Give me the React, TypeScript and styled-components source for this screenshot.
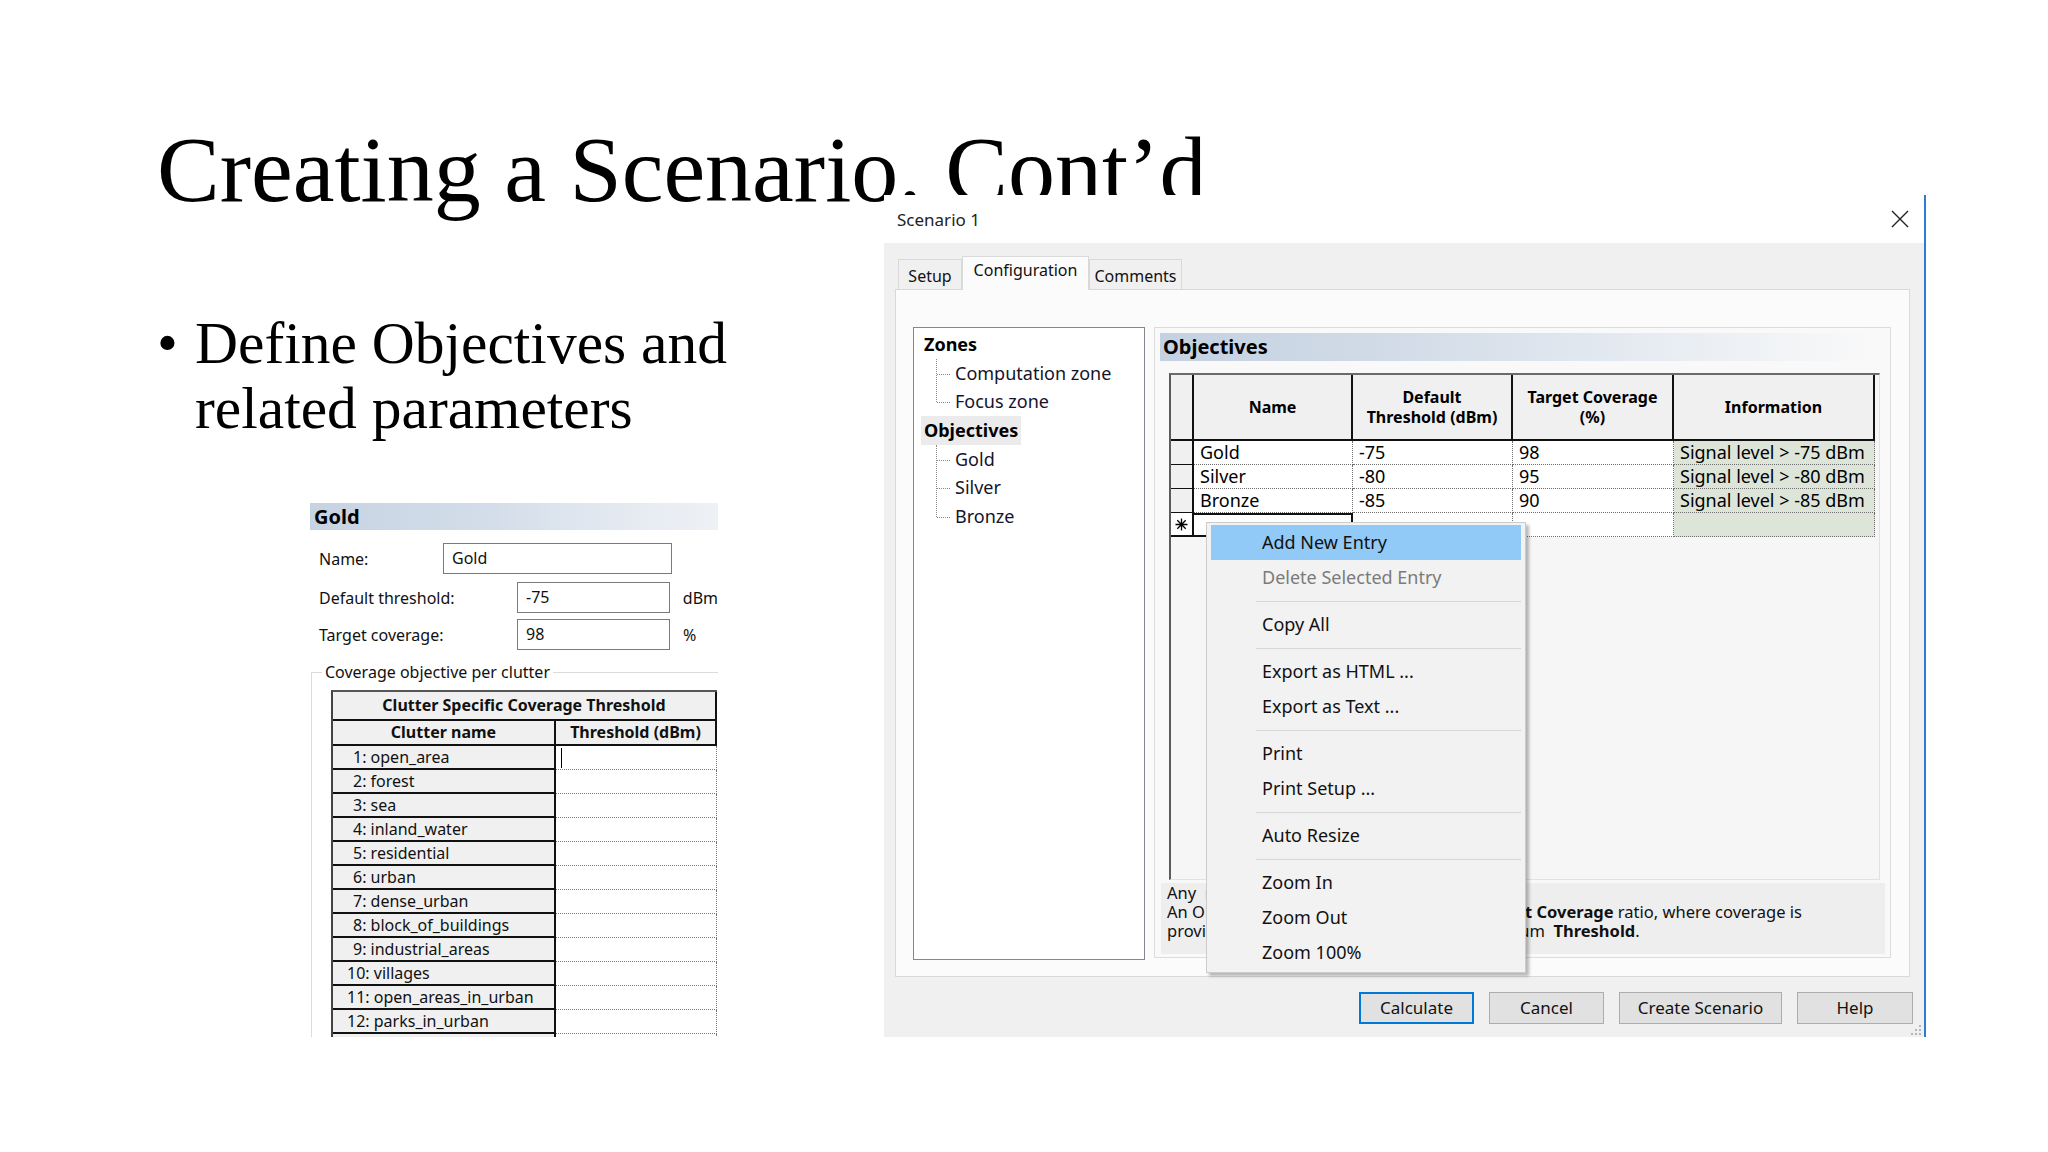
import React from 'react';
import styled, { createGlobalStyle } from 'styled-components';

const GlobalStyle = createGlobalStyle`
  html, body {
    margin: 0;
    padding: 0;
    background: #fff;
  }
  body {
    width: 2048px;
    height: 1152px;
    overflow: hidden;
  }
  * {
    box-sizing: border-box;
  }
`;

const UI_FONT = `'Noto Sans', 'Open Sans', 'DejaVu Sans', sans-serif`;

const Slide = styled.div`
  width: 2048px;
  height: 1152px;
  display: grid;
  grid-template-columns: 157px 727px 1042px 1fr;
  grid-template-rows: 195px 842px 1fr;
  background: #fff;
  font-family: 'Liberation Serif', 'Times New Roman', serif;
  color: #000;
`;

const Title = styled.h1`
  grid-column: 2 / 4;
  grid-row: 1;
  align-self: start;
  margin: 122px 0 0;
  font-size: 94px;
  line-height: 94px;
  font-weight: 400;
  white-space: nowrap;
`;

const LeftColumn = styled.div`
  grid-column: 2;
  grid-row: 2;
  display: flex;
  flex-direction: column;
  min-height: 0;
  overflow: hidden;
`;

const Bullet = styled.div`
  display: flex;
  margin-top: 116px;
  font-size: 59.5px;
  line-height: 65px;
`;

const BulletDot = styled.span`
  flex: none;
  width: 38px;
`;

/* ---------- left "Gold" panel ---------- */

const GoldPanel = styled.div`
  flex: 1;
  min-height: 0;
  width: 408px;
  margin: 62px 0 0 153px;
  overflow: hidden;
  font-family: ${UI_FONT};
  font-size: 16px;
  color: #111;
`;

const SectionBar = styled.div`
  height: 27px;
  padding-left: 4px;
  line-height: 27px;
  font-size: 20px;
  font-weight: 700;
  color: #000;
  background: linear-gradient(90deg, #c6d3e2 0%, #d4deea 45%, #e6ebf2 80%, #eef1f5 100%);
`;

const Form = styled.div`
  display: flex;
  flex-direction: column;
  padding: 13px 0 0 9px;
`;

const FormRow = styled.div<{ $gap: number }>`
  display: flex;
  align-items: center;
  height: 31px;
  margin-top: ${(p) => p.$gap}px;
`;

const FieldLabel = styled.span<{ $w: number }>`
  flex: none;
  width: ${(p) => p.$w}px;
`;

const Field = styled.div<{ $w: number }>`
  width: ${(p) => p.$w}px;
  height: 31px;
  padding-left: 8px;
  border: 1px solid #7a7a7a;
  background: #fff;
  line-height: 29px;
`;

const Unit = styled.span`
  margin-left: 13px;
`;

const GroupBox = styled.fieldset`
  margin: 11px 0 0 1px;
  padding: 0 0 0 19px;
  min-width: 0;
  border: 1px solid #dcdcdc;
  border-right: none;
  border-bottom: none;
`;

const GroupLegend = styled.legend`
  margin-left: -9px;
  padding: 0 3px;
  line-height: 22px;
`;

const ClutterTable = styled.div`
  width: 386px;
  margin-top: 7px;
  border-top: 2px solid #555;
  border-left: 2px solid #444;
`;

const ClutterTitle = styled.div`
  height: 29px;
  line-height: 27px;
  text-align: center;
  font-weight: 700;
  background: #f0f0f0;
  border-right: 2px solid #111;
  border-bottom: 2px solid #111;
`;

const ClutterRow = styled.div<{ $h: number }>`
  display: grid;
  grid-template-columns: 223px 161px;
  height: ${(p) => p.$h}px;
`;

const ClutterHead = styled.div`
  line-height: 23px;
  text-align: center;
  font-weight: 700;
  background: #f0f0f0;
  border-right: 2px solid #111;
  border-bottom: 2px solid #111;
`;

const ClutterName = styled.div<{ $pad: number }>`
  padding-left: ${(p) => p.$pad}px;
  line-height: 22px;
  background: #f0f0f0;
  border-right: 2px solid #111;
  border-bottom: 2px solid #111;
  white-space: nowrap;
  overflow: hidden;
`;

const ClutterValue = styled.div`
  display: flex;
  align-items: center;
  background: #fff;
  border-right: 1px dotted #777;
  border-bottom: 1px dotted #777;
`;

const Caret = styled.span`
  width: 1px;
  height: 20px;
  margin-left: 5px;
  background: #000;
`;

/* ---------- dialog ---------- */

const Dialog = styled.div`
  grid-column: 3;
  grid-row: 2;
  position: relative;
  z-index: 2;
  display: flex;
  flex-direction: column;
  border-right: 2px solid #2b7cd3;
  font-family: ${UI_FONT};
  color: #000;
  overflow: hidden;
`;

const TitleBar = styled.div`
  flex: none;
  display: flex;
  align-items: center;
  justify-content: space-between;
  height: 48px;
  padding: 0 15px 0 13px;
  background: #fff;
  font-size: 17px;
  color: #222;
`;

const Body = styled.div`
  flex: 1;
  display: flex;
  flex-direction: column;
  padding: 13px 14px 0 11px;
  background: #f0f0f0;
`;

const TabStrip = styled.div`
  position: relative;
  z-index: 1;
  display: flex;
  align-items: flex-end;
  height: 34px;
  margin-bottom: -1px;
  padding-left: 3px;
`;

const Tab = styled.div<{ $w: number; $active?: boolean }>`
  width: ${(p) => p.$w}px;
  height: ${(p) => (p.$active ? 34 : 31)}px;
  padding-top: ${(p) => (p.$active ? 0 : 3)}px;
  border: 1px solid #d9d9d9;
  border-bottom: ${(p) => (p.$active ? 'none' : '1px solid #d9d9d9')};
  background: ${(p) => (p.$active ? '#fbfbfb' : '#f0f0f0')};
  font-size: 16px;
  line-height: 27px;
  text-align: center;
  color: #111;
`;

const TabPanel = styled.div`
  flex: none;
  display: flex;
  align-items: flex-start;
  gap: 9px;
  height: 688px;
  padding: 37px 18px 16px 17px;
  border: 1px solid #d9d9d9;
  background: #fbfbfb;
`;

const TreeBox = styled.div`
  flex: none;
  width: 232px;
  height: 633px;
  padding: 2px 0 0 10px;
  border: 1px solid #828790;
  background: #fff;
  font-size: 18px;
`;

const TreeParent = styled.div<{ $hl?: boolean }>`
  height: 28.7px;
  line-height: 28.7px;
  font-weight: 700;

  span {
    display: inline-block;
    margin-left: -3px;
    padding: 0 3px;
    background: ${(p) => (p.$hl ? '#ebebeb' : 'transparent')};
  }
`;

const TreeChildren = styled.div`
  position: relative;

  &::before {
    content: '';
    position: absolute;
    left: 12px;
    top: 0;
    bottom: 14px;
    border-left: 1px dotted #8a8a8a;
  }
`;

const TreeChild = styled.div`
  position: relative;
  height: 28.7px;
  padding-left: 31px;
  line-height: 28.7px;
  color: #14142a;

  &::before {
    content: '';
    position: absolute;
    left: 13px;
    width: 13px;
    top: 15px;
    border-top: 1px dotted #8a8a8a;
  }
`;

const ObjPanel = styled.div`
  flex: 1;
  display: flex;
  flex-direction: column;
  height: 631px;
  padding: 5px;
  border: 1px solid #dcdcdc;
  background: #f9f9f9;
`;

const ObjHeader = styled(SectionBar)`
  height: 28px;
  margin-right: 13px;
  padding-left: 3px;
  line-height: 28px;
  background: linear-gradient(90deg, #c4d1e1 0%, #d3dce8 35%, #e7ecf2 70%, rgba(249, 249, 249, 0) 100%);
`;

const GridFrame = styled.div`
  flex: none;
  height: 507px;
  margin: 12px 5px 0 9px;
  border-top: 2px solid #6b6b6b;
  border-left: 2px solid #5b5b5b;
  border-right: 1px solid #e2e2e2;
  border-bottom: 1px solid #e2e2e2;
  background: #f6f6f6;
`;

const ObjGrid = styled.div`
  display: grid;
  grid-template-columns: 23px 159px 160px 161px 201px;
  grid-template-rows: 66px;
  grid-auto-rows: 24px;
  font-size: 18px;
`;

const HeadCell = styled.div`
  display: flex;
  align-items: center;
  justify-content: center;
  background: #f0f0f0;
  border-right: 2px solid #111;
  border-bottom: 2px solid #111;
  font-size: 16px;
  font-weight: 700;
  line-height: 20px;
  text-align: center;
`;

const SelCell = styled.div<{ $current?: boolean }>`
  display: flex;
  align-items: center;
  justify-content: center;
  background: ${(p) => (p.$current ? '#fff' : '#f0f0f0')};
  border-right: 2px solid #111;
  border-bottom: ${(p) => (p.$current ? 2 : 1)}px solid #111;
`;

const DataCell = styled.div<{ $info?: boolean; $focus?: boolean }>`
  padding-left: 6px;
  line-height: 23px;
  white-space: nowrap;
  overflow: hidden;
  background: ${(p) => (p.$info ? '#dde5d8' : '#fff')};
  border-right: 1px dotted #6f6f6f;
  border-bottom: 1px dotted #6f6f6f;
  ${(p) => (p.$focus ? 'border: 2px solid #111; border-left: none;' : '')}
`;

const Description = styled.div`
  flex: none;
  height: 71px;
  margin: 3px 0 0 1px;
  padding: 0 6px;
  background: #eeeeee;
  font-size: 16.5px;
  line-height: 19px;
  color: #111;
  white-space: pre;
  overflow: hidden;

  b {
    font-weight: 700;
  }
`;

const ButtonRow = styled.div`
  display: flex;
  justify-content: flex-end;
  gap: 15px;
  margin: 15px -3px 0 0;
`;

const Button = styled.div<{ $w: number; $default?: boolean }>`
  width: ${(p) => p.$w}px;
  height: 32px;
  border: ${(p) => (p.$default ? '2px solid #0078d7' : '1px solid #adadad')};
  background: #e1e1e1;
  font-size: 17px;
  line-height: ${(p) => (p.$default ? 28 : 30)}px;
  text-align: center;
  color: #111;
`;

const Grip = styled.svg`
  position: absolute;
  right: 3px;
  bottom: 2px;
`;

/* ---------- context menu ---------- */

const Menu = styled.div`
  position: absolute;
  left: 322px;
  top: 327px;
  width: 320px;
  padding: 2px 4px;
  border: 1px solid #cccccc;
  background: #f2f2f2;
  box-shadow: 3px 3px 3px rgba(0, 0, 0, 0.28);
  font-size: 18px;
`;

const MenuItem = styled.div<{ $active?: boolean; $disabled?: boolean }>`
  height: 35px;
  padding-left: 51px;
  line-height: 35px;
  color: ${(p) => (p.$disabled ? '#7b7b7b' : '#111')};
  background: ${(p) => (p.$active ? '#91c9f7' : 'transparent')};
`;

const MenuSep = styled.div`
  height: 12px;
  margin-left: 45px;
  display: flex;
  align-items: center;

  &::after {
    content: '';
    flex: 1;
    height: 1px;
    background: #d7d7d7;
  }
`;

const objectives = [
  { name: 'Gold', thr: '-75', cov: '98', info: 'Signal level > -75 dBm' },
  { name: 'Silver', thr: '-80', cov: '95', info: 'Signal level > -80 dBm' },
  { name: 'Bronze', thr: '-85', cov: '90', info: 'Signal level > -85 dBm' },
];

const clutters = [
  'open_area',
  'forest',
  'sea',
  'inland_water',
  'residential',
  'urban',
  'dense_urban',
  'block_of_buildings',
  'industrial_areas',
  'villages',
  'open_areas_in_urban',
  'parks_in_urban',
];

const menuGroups = [
  [{ label: 'Add New Entry', active: true }, { label: 'Delete Selected Entry', disabled: true }],
  [{ label: 'Copy All' }],
  [{ label: 'Export as HTML ...' }, { label: 'Export as Text ...' }],
  [{ label: 'Print' }, { label: 'Print Setup ...' }],
  [{ label: 'Auto Resize' }],
  [{ label: 'Zoom In' }, { label: 'Zoom Out' }, { label: 'Zoom 100%' }],
];

const CloseIcon = () => (
  <svg width="18" height="18" viewBox="0 0 18 18">
    <path d="M1 1 L17 17 M17 1 L1 17" stroke="#222" strokeWidth="1.4" fill="none" />
  </svg>
);

const NewRowStar = () => (
  <svg width="13" height="13" viewBox="0 0 13 13">
    <path
      d="M6.5 0.5 V12.5 M0.5 6.5 H12.5 M2.3 2.3 L10.7 10.7 M10.7 2.3 L2.3 10.7"
      stroke="#000"
      strokeWidth="1.3"
      fill="none"
    />
  </svg>
);

const App = () => {
  return (
    <>
      <GlobalStyle />
      <Slide>
        <Title>Creating a Scenario. Cont’d</Title>

        <LeftColumn>
          <Bullet>
            <BulletDot>•</BulletDot>
            <span>
              Define Objectives and
              <br />
              related parameters
            </span>
          </Bullet>

          <GoldPanel>
            <SectionBar>Gold</SectionBar>
            <Form>
              <FormRow $gap={0}>
                <FieldLabel $w={124}>Name:</FieldLabel>
                <Field $w={229}>Gold</Field>
              </FormRow>
              <FormRow $gap={8}>
                <FieldLabel $w={198}>Default threshold:</FieldLabel>
                <Field $w={153}>-75</Field>
                <Unit>dBm</Unit>
              </FormRow>
              <FormRow $gap={6}>
                <FieldLabel $w={198}>Target coverage:</FieldLabel>
                <Field $w={153}>98</Field>
                <Unit>%</Unit>
              </FormRow>
            </Form>
            <GroupBox>
              <GroupLegend>Coverage objective per clutter</GroupLegend>
              <ClutterTable>
                <ClutterTitle>Clutter Specific Coverage Threshold</ClutterTitle>
                <ClutterRow $h={25}>
                  <ClutterHead>Clutter name</ClutterHead>
                  <ClutterHead>Threshold (dBm)</ClutterHead>
                </ClutterRow>
                {clutters.map((c, i) => (
                  <ClutterRow $h={24} key={c}>
                    <ClutterName $pad={i < 9 ? 20 : 14}>{`${i + 1}: ${c}`}</ClutterName>
                    <ClutterValue>{i === 0 ? <Caret /> : null}</ClutterValue>
                  </ClutterRow>
                ))}
                <ClutterRow $h={24}>
                  <ClutterName $pad={14} />
                  <ClutterValue />
                </ClutterRow>
              </ClutterTable>
            </GroupBox>
          </GoldPanel>
        </LeftColumn>

        <Dialog>
          <TitleBar>
            <span>Scenario 1</span>
            <CloseIcon />
          </TitleBar>
          <Body>
            <TabStrip>
              <Tab $w={64}>Setup</Tab>
              <Tab $w={127} $active>
                Configuration
              </Tab>
              <Tab $w={93}>Comments</Tab>
            </TabStrip>
            <TabPanel>
              <TreeBox>
                <TreeParent>
                  <span>Zones</span>
                </TreeParent>
                <TreeChildren>
                  <TreeChild>Computation zone</TreeChild>
                  <TreeChild>Focus zone</TreeChild>
                </TreeChildren>
                <TreeParent $hl>
                  <span>Objectives</span>
                </TreeParent>
                <TreeChildren>
                  <TreeChild>Gold</TreeChild>
                  <TreeChild>Silver</TreeChild>
                  <TreeChild>Bronze</TreeChild>
                </TreeChildren>
              </TreeBox>

              <ObjPanel>
                <ObjHeader>Objectives</ObjHeader>
                <GridFrame>
                  <ObjGrid>
                    <HeadCell />
                    <HeadCell>Name</HeadCell>
                    <HeadCell>
                      Default
                      <br />
                      Threshold (dBm)
                    </HeadCell>
                    <HeadCell>
                      Target Coverage
                      <br />
                      (%)
                    </HeadCell>
                    <HeadCell>Information</HeadCell>
                    {objectives.map((o) => (
                      <React.Fragment key={o.name}>
                        <SelCell />
                        <DataCell>{o.name}</DataCell>
                        <DataCell>{o.thr}</DataCell>
                        <DataCell>{o.cov}</DataCell>
                        <DataCell $info>{o.info}</DataCell>
                      </React.Fragment>
                    ))}
                    <SelCell $current>
                      <NewRowStar />
                    </SelCell>
                    <DataCell $focus />
                    <DataCell />
                    <DataCell />
                    <DataCell $info />
                  </ObjGrid>
                </GridFrame>
                <Description>
                  {'Any  number of objectives can be created.\n'}
                  {'An Objective has a set Threshold,  and a '}
                  <b>Target Coverage</b>
                  {' ratio, where coverage is\n'}
                  {'provided where the signal is above the minimum  '}
                  <b>Threshold</b>.
                </Description>
              </ObjPanel>
            </TabPanel>

            <ButtonRow>
              <Button $w={115} $default>
                Calculate
              </Button>
              <Button $w={115}>Cancel</Button>
              <Button $w={163}>Create Scenario</Button>
              <Button $w={116}>Help</Button>
            </ButtonRow>
          </Body>

          <Grip width="10" height="10" viewBox="0 0 10 10">
            <g fill="#b5b5b5">
              <rect x="8" y="0" width="2" height="2" />
              <rect x="4" y="4" width="2" height="2" />
              <rect x="8" y="4" width="2" height="2" />
              <rect x="0" y="8" width="2" height="2" />
              <rect x="4" y="8" width="2" height="2" />
              <rect x="8" y="8" width="2" height="2" />
            </g>
          </Grip>

          <Menu>
            {menuGroups.map((group, gi) => (
              <React.Fragment key={gi}>
                {gi > 0 ? <MenuSep /> : null}
                {group.map((item) => (
                  <MenuItem key={item.label} $active={item.active} $disabled={item.disabled}>
                    {item.label}
                  </MenuItem>
                ))}
              </React.Fragment>
            ))}
          </Menu>
        </Dialog>
      </Slide>
    </>
  );
};

export default App;
